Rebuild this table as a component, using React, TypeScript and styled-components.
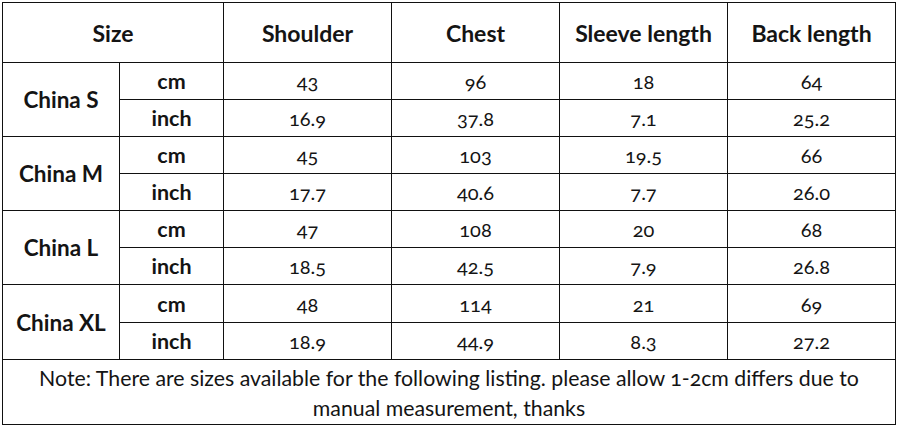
import React from "react";
import styled, { createGlobalStyle } from "styled-components";

const Global = createGlobalStyle`
  html, body { margin: 0; padding: 0; background: #ffffff; }
  body { font-family: Lato, "Open Sans", "Liberation Sans", sans-serif; color: #141414; }
`;

const Page = styled.div`
  padding: 2px 0 0 2px;
  width: 897px;
  height: 426px;
  box-sizing: border-box;
`;

const Table = styled.div`
  display: grid;
  grid-template-columns: 116px 103px repeat(4, 167px);
  grid-template-rows: 59px 36px 36px 36px 36px 36px 36px 37px 36px 64px;
  gap: 1px;
  padding: 1px;
  background: #111;
  width: 894px;
  box-sizing: border-box;
`;

const Cell = styled.div<{ $span?: number; $rows?: number; $bold?: boolean; $size?: number }>`
  background: #fff;
  display: flex;
  align-items: center;
  justify-content: center;
  text-align: center;
  white-space: nowrap;
  font-size: ${(p) => p.$size ?? 20}px;
  font-weight: ${(p) => (p.$bold ? 700 : 400)};
  font-feature-settings: "onum" 1;
  font-variant-numeric: oldstyle-nums;
  ${(p) => (p.$span ? `grid-column: span ${p.$span};` : "")}
  ${(p) => (p.$rows ? `grid-row: span ${p.$rows};` : "")}
`;

const HeaderCell = styled(Cell).attrs({ $bold: true, $size: 23 })``;

const SizeName = styled(Cell).attrs({ $bold: true, $size: 22.5, $rows: 2 })``;

const UnitCell = styled(Cell).attrs({ $bold: true, $size: 21.5 })``;

const NoteCell = styled(Cell).attrs({ $size: 21.3 })`
  grid-column: 1 / -1;
  line-height: 30px;
  padding-top: 1px;
  white-space: normal;
`;

const headers = ["Shoulder", "Chest", "Sleeve length", "Back length"];

const sizes: { name: string; cm: string[]; inch: string[] }[] = [
  { name: "China S", cm: ["43", "96", "18", "64"], inch: ["16.9", "37.8", "7.1", "25.2"] },
  { name: "China M", cm: ["45", "103", "19.5", "66"], inch: ["17.7", "40.6", "7.7", "26.0"] },
  { name: "China L", cm: ["47", "108", "20", "68"], inch: ["18.5", "42.5", "7.9", "26.8"] },
  { name: "China XL", cm: ["48", "114", "21", "69"], inch: ["18.9", "44.9", "8.3", "27.2"] },
];

export default function App() {
  return (
    <>
      <Global />
      <Page>
        <Table>
          <HeaderCell $span={2}>Size</HeaderCell>
          {headers.map((h) => (
            <HeaderCell key={h}>{h}</HeaderCell>
          ))}
          {sizes.map((s) => (
            <React.Fragment key={s.name}>
              <SizeName>{s.name}</SizeName>
              <UnitCell>cm</UnitCell>
              {s.cm.map((v, i) => (
                <Cell key={"c" + i}>{v}</Cell>
              ))}
              <UnitCell>inch</UnitCell>
              {s.inch.map((v, i) => (
                <Cell key={"i" + i}>{v}</Cell>
              ))}
            </React.Fragment>
          ))}
          <NoteCell>
            Note: There are sizes available for the following listing. please allow 1-2cm differs due to
            <br />
            manual measurement, thanks
          </NoteCell>
        </Table>
      </Page>
    </>
  );
}
